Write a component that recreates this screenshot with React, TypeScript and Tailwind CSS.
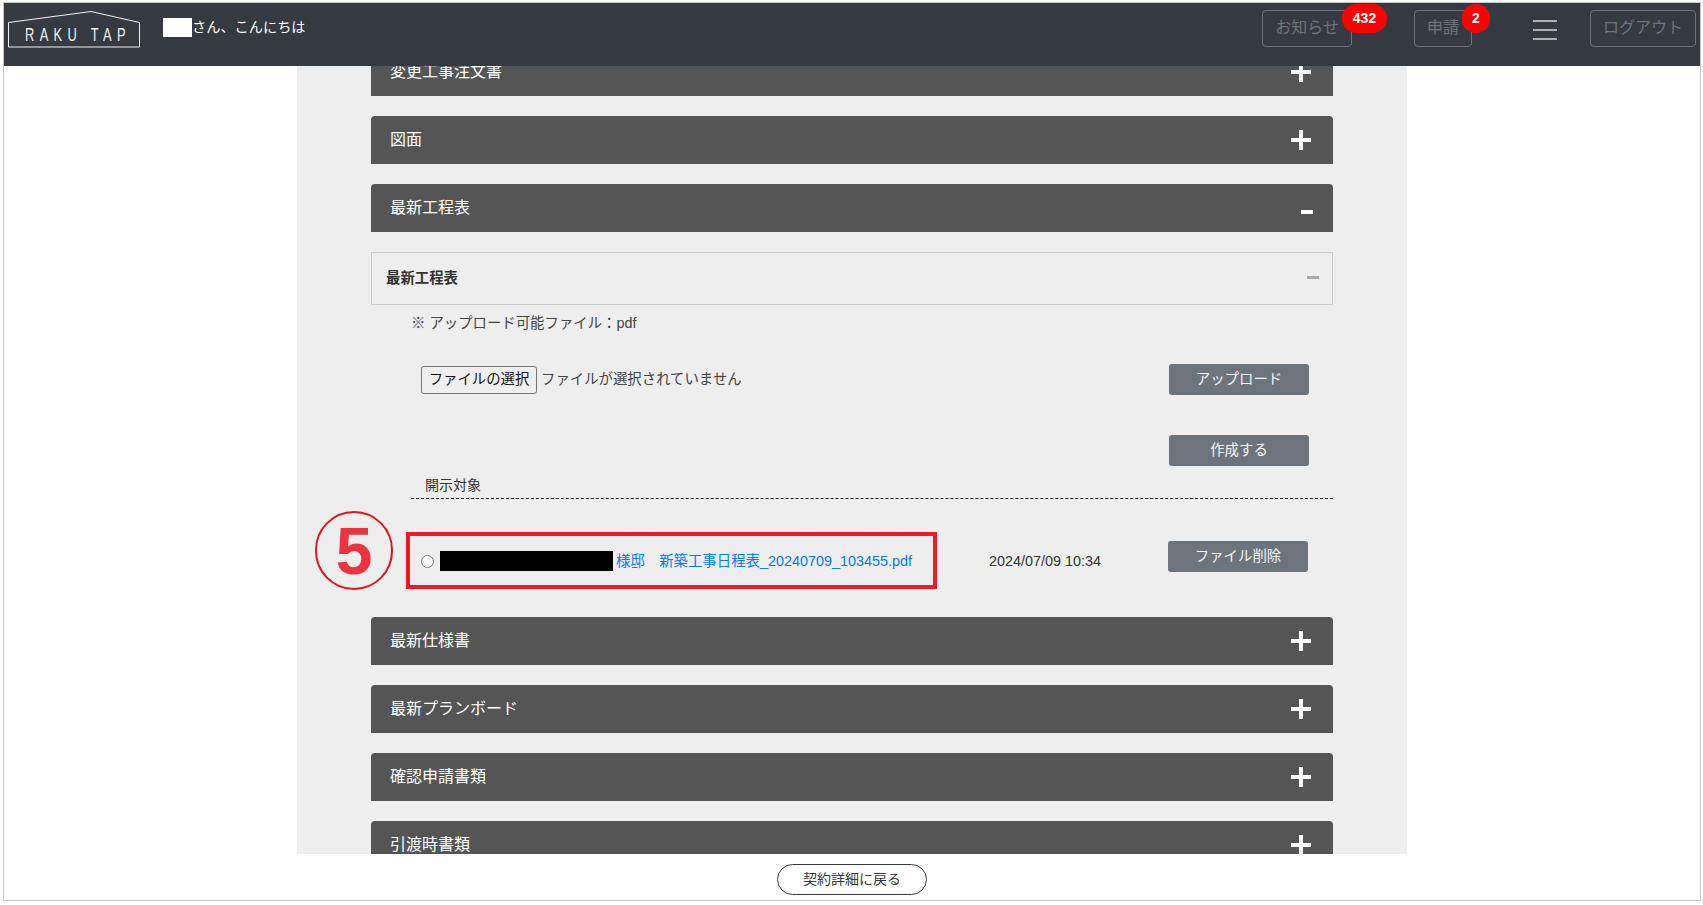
const font = "font-['Liberation_Sans','Noto_Sans_CJK_JP',sans-serif]";

function Bar({ title, sign = "+" }: { title: string; sign?: string }) {
  return (
    <div className="h-[48px] mb-[20px] bg-[#555555] rounded-t-[4px] flex items-center justify-between pl-[19px] text-white">
      <span className="text-[16px]">{title}</span>
      {sign === "+" ? (
        <span className="relative w-[20px] h-[20px] shrink-0 mr-[22px]">
          <span className="absolute left-0 top-[8px] w-[20px] h-[4px] bg-white" />
          <span className="absolute left-[8px] top-0 w-[4px] h-[20px] bg-white" />
        </span>
      ) : (
        <span className="w-[12px] h-[4px] bg-white shrink-0 mt-[7px] mr-[20px]" />
      )}
    </div>
  );
}

function GrayButton({ label }: { label: string }) {
  return (
    <button className="w-[140px] h-[31px] rounded-[3px] bg-[#6c757d] text-[#f4f4f4] text-[14.4px] leading-[28px] pb-[1px]">
      {label}
    </button>
  );
}

function HeaderButton({ label, width, badge, badgeWidth, badgeLeft }: { label: string; width: string; badge?: string; badgeWidth?: string; badgeLeft?: string }) {
  return (
    <div className={`relative h-[37px] border border-[#6c757d] rounded-[4px] flex items-center justify-center pb-[2px] text-[#6c757d] text-[16px] ${width}`}>
      {label}
      {badge && (
        <span className={`absolute -top-[7px] h-[29px] rounded-full bg-[#ff0000] text-white text-[14px] font-bold flex items-center justify-center ${badgeWidth} ${badgeLeft}`}>
          {badge}
        </span>
      )}
    </div>
  );
}

export default function App() {
  return (
    <div className={`${font} w-full h-[905px] bg-white pt-[2px] pl-[3px] pr-[2px] pb-[4px] overflow-hidden`}>
      <div className="h-full border border-[#c8c8c8] flex flex-col">
        <header className="h-[63px] shrink-0 bg-[#353a42] flex items-start pt-[7px] pl-[4px] pr-[4px] relative z-10">
          <svg width="132" height="37" viewBox="0 0 132 37" className="shrink-0 mt-[1px]">
            <path d="M0.5 11.5 L83 0.5 L131.5 11.5 V36 H0.5 Z" fill="none" stroke="#f0f0f0" strokeWidth="1" />
            <text transform="translate(17 29.5) scale(0.68 1)" fill="#f0f0f0" fontSize="19" textLength="148" lengthAdjust="spacing" fontFamily="Liberation Sans">RAKU TAP</text>
          </svg>
          <div className="ml-[23px] mt-[8px] flex items-center text-white text-[14.2px] leading-[19px]">
            <span className="w-[29px] h-[19px] bg-white" />
            <span>さん、こんにちは</span>
          </div>
          <div className="ml-auto flex items-start">
            <HeaderButton label="お知らせ" width="w-[90px]" badge="432" badgeWidth="w-[45px]" badgeLeft="left-[79px]" />
            <div className="ml-[62px]">
              <HeaderButton label="申請" width="w-[58px]" badge="2" badgeWidth="w-[28px]" badgeLeft="left-[47px]" />
            </div>
            <div className="ml-[61px] w-[24px] mt-[10px] flex flex-col gap-[7px]">
              <span className="h-[2px] bg-[#adb0b3]" />
              <span className="h-[2px] bg-[#adb0b3]" />
              <span className="h-[2px] bg-[#adb0b3]" />
            </div>
            <div className="ml-[33px]">
              <HeaderButton label="ログアウト" width="w-[106px]" />
            </div>
          </div>
        </header>

        <main className="flex-1 min-h-0 overflow-hidden">
          <div className="w-[1110px] mx-auto -mt-[18px] bg-[#eeeeee] px-[74px] h-[1000px]">
            <Bar title="変更工事注文書" />
            <Bar title="図面" />
            <Bar title="最新工程表" sign="-" />

            <div className="h-[53px] border border-[#cccccc] flex items-center justify-between pl-[14px] pr-[13px]">
              <span className="text-[14.4px] font-bold text-[#333333]">最新工程表</span>
              <span className="w-[12px] h-[3px] bg-[#aaaaaa] -mt-[3px]" />
            </div>

            <div className="h-[36px] pl-[40px] pt-[2px] flex items-center text-[14.4px] text-[#444444]">
              ※ アップロード可能ファイル：pdf
            </div>

            <div className="mt-[23px] h-[31px] flex items-center pl-[50px] pr-[24px] text-[14.4px] text-[#444444]">
              <button className="h-[28px] w-[116px] border border-[#767676] rounded-[3px] bg-[#efefef] text-[#111111] text-[14.4px] shrink-0">ファイルの選択</button>
              <span className="ml-[4px]">ファイルが選択されていません</span>
              <span className="ml-auto"><GrayButton label="アップロード" /></span>
            </div>

            <div className="mt-[40px] flex justify-end pr-[24px]">
              <GrayButton label="作成する" />
            </div>

            <div className="ml-[40px] h-[33px] border-b border-dashed border-[#222222] flex items-end pl-[14px] pb-[2px] text-[14px] text-[#333333]">
              開示対象
            </div>

            <div className="relative mt-[33px] mb-[28px] h-[57px] flex items-center pl-[35px] pr-[25px]">
              <div className="absolute -left-[56px] -top-[21px] w-[78px] h-[79px] rounded-full border-2 border-[#e3141e] flex items-center justify-center text-[#ee3340] text-[66px] font-bold leading-none">
                5
              </div>
              <div className="w-[531px] h-[57px] border-4 border-[#ed1c24] flex items-center pl-[11px] pt-[2px] shrink-0">
                <input type="radio" readOnly checked={false} className="w-[13px] h-[13px] m-0 shrink-0" />
                <span className="ml-[6px] w-[173px] h-[20px] bg-black shrink-0 -mt-[2px]" />
                <a className="ml-[3px] text-[#007bff] text-[14.4px] whitespace-nowrap">様邸　新築工事日程表_20240709_103455.pdf</a>
              </div>
              <span className="ml-[52px] pt-[2px] text-[14.4px] text-[#333333] whitespace-nowrap">2024/07/09 10:34</span>
              <span className="ml-auto -mt-[8px]"><GrayButton label="ファイル削除" /></span>
            </div>

            <Bar title="最新仕様書" />
            <Bar title="最新プランボード" />
            <Bar title="確認申請書類" />
            <Bar title="引渡時書類" />
          </div>
        </main>

        <footer className="h-[46px] shrink-0 bg-white flex justify-center pt-[10px]">
          <button className="w-[150px] h-[31px] rounded-full border border-[#343a40] text-[#343a40] text-[14px]">契約詳細に戻る</button>
        </footer>
      </div>
    </div>
  );
}
